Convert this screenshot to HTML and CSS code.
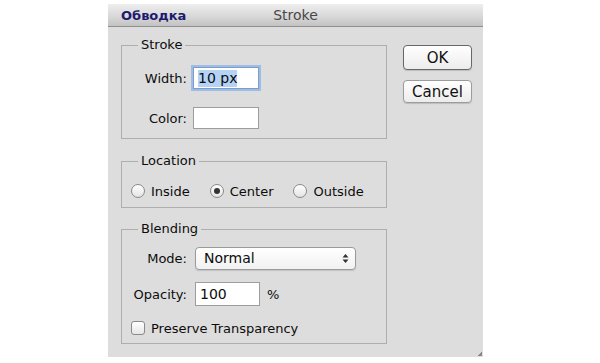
FILE: index.html
```html
<!DOCTYPE html>
<html lang="en">
<head>
    <meta charset="UTF-8">
    <meta name="viewport" content="width=device-width, initial-scale=1.0">
    <title>Stroke</title>
    <link rel="stylesheet" href="styles.css">
</head>
<body>
    <div class="dialog">
        <div class="titlebar">
            <span class="title-ru">Обводка</span>
            <span class="title">Stroke</span>
            <span></span>
        </div>

        <div class="content">
            <div class="panels">
                <!-- Stroke -->
                <fieldset class="group group-stroke">
                    <legend>Stroke</legend>
                    <div class="form-grid">
                        <label class="label">Width:</label>
                        <div class="field"><span class="input input-focus"><span class="selected">10 px</span></span></div>
                        <label class="label">Color:</label>
                        <div class="field"><span class="input"></span></div>
                    </div>
                </fieldset>

                <!-- Location -->
                <fieldset class="group group-location">
                    <legend>Location</legend>
                    <div class="radio-row">
                        <span class="option"><span class="radio"></span>Inside</span>
                        <span class="option"><span class="radio checked"></span>Center</span>
                        <span class="option"><span class="radio"></span>Outside</span>
                    </div>
                </fieldset>

                <!-- Blending -->
                <fieldset class="group group-blending">
                    <legend>Blending</legend>
                    <div class="form-grid blend-grid">
                        <label class="label">Mode:</label>
                        <div class="field">
                            <span class="select">Normal
                                <svg class="updown" width="7" height="11" viewBox="0 0 7 11">
                                    <path d="M3.5 1 L6.5 4.5 L0.5 4.5 Z" fill="#333"/>
                                    <path d="M3.5 10 L6.5 6.5 L0.5 6.5 Z" fill="#333"/>
                                </svg>
                            </span>
                        </div>
                        <label class="label">Opacity:</label>
                        <div class="field"><span class="input input-tall">100</span><span class="unit">%</span></div>
                    </div>
                    <div class="check-row">
                        <span class="checkbox"></span>Preserve Transparency
                    </div>
                </fieldset>
            </div>

            <div class="buttons">
                <button class="btn btn-default">OK</button>
                <button class="btn">Cancel</button>
            </div>
        </div>
        <span class="grip"></span>
    </div>
</body>
</html>
```

FILE: styles.css
```css
body {
    margin: 0;
    background-color: #fff;
    font-family: "DejaVu Sans", "Liberation Sans", sans-serif;
    font-size: 13px;
    color: #0c0c0c;
}
.dialog {
    position: relative;
    width: 375px;
    height: 353px;
    margin: 4px 0 0 108px;
    background-color: #dddddd;
    box-sizing: border-box;
}
.titlebar {
    display: grid;
    grid-template-columns: 1fr auto 1fr;
    align-items: center;
    height: 22px;
    border-bottom: 1px solid #8f8f8f;
    background: linear-gradient(#eeeeee, #d6d6d6 60%, #c3c3c3);
}
.title-ru {
    padding-left: 13px;
    font-weight: bold;
    font-size: 13px;
    color: #1d1a6e;
}
.title {
    font-size: 14px;
    color: #484848;
}
.content {
    display: flex;
    padding: 10px 0 0 13px;
}
.panels {
    width: 266px;
}
.group {
    margin: 0;
    border: 1px solid #aeaeae;
    padding: 0 8px;
    min-inline-size: 0;
}
.group legend {
    margin-left: 8px;
    padding: 0 3px;
    line-height: 16px;
}
.group-stroke {
    padding-top: 13px;
    padding-bottom: 8px;
}
.group-location {
    margin-top: 14px;
    padding-top: 12px;
    padding-bottom: 6px;
}
.group-blending {
    margin-top: 13px;
    padding-top: 9px;
    padding-bottom: 5px;
}
.form-grid {
    display: grid;
    grid-template-columns: 57px auto;
    grid-auto-rows: 24px;
    column-gap: 6px;
    row-gap: 16px;
    align-items: center;
}
.blend-grid {
    row-gap: 12px;
}
.label {
    text-align: right;
}
.field {
    display: flex;
    align-items: center;
}
.input {
    display: flex;
    align-items: center;
    box-sizing: border-box;
    width: 66px;
    height: 22px;
    padding: 0 4px;
    background-color: #fff;
    border: 1px solid #9d9d9d;
    font-size: 14px;
}
.input-focus {
    border-color: #7d9cc8;
    box-shadow: 0 0 0 2px #9dbde6;
}
.input-tall {
    width: 65px;
    height: 24px;
    margin-left: 2px;
}
.selected {
    background-color: #b4d3f7;
    line-height: 17px;
}
.unit {
    margin-left: 7px;
}
.select {
    display: flex;
    align-items: center;
    justify-content: space-between;
    box-sizing: border-box;
    width: 161px;
    height: 23px;
    margin-left: 2px;
    padding: 0 6px 0 8px;
    border: 1px solid #9a9a9a;
    border-radius: 4px;
    background: linear-gradient(#ffffff, #f1f1f1);
    box-shadow: 0 1px 1px rgba(0, 0, 0, 0.12);
    font-size: 14px;
}
.radio-row {
    display: flex;
    align-items: center;
    gap: 20px;
    height: 20px;
    padding-left: 1px;
}
.option {
    display: flex;
    align-items: center;
    gap: 6px;
}
.radio {
    position: relative;
    box-sizing: border-box;
    width: 14px;
    height: 14px;
    border: 1px solid #8a8a8a;
    border-radius: 50%;
    background: linear-gradient(#ffffff, #e4e4e4);
}
.radio.checked::after {
    content: "";
    position: absolute;
    left: 3px;
    top: 3px;
    width: 6px;
    height: 6px;
    border-radius: 50%;
    background-color: #333;
}
.check-row {
    display: flex;
    align-items: center;
    gap: 6px;
    height: 20px;
    margin-top: 12px;
    padding-left: 1px;
}
.checkbox {
    box-sizing: border-box;
    width: 14px;
    height: 14px;
    border: 1px solid #8a8a8a;
    border-radius: 3px;
    background: linear-gradient(#ffffff, #e6e6e6);
}
.buttons {
    display: flex;
    flex-direction: column;
    gap: 10px;
    margin-left: 16px;
    padding-top: 8px;
}
.btn {
    width: 69px;
    height: 23px;
    padding: 0;
    border: 1px solid #9c9c9c;
    border-radius: 4px;
    background: linear-gradient(#ffffff, #ececec);
    box-shadow: 0 1px 1px rgba(0, 0, 0, 0.15);
    font-family: "DejaVu Sans", "Liberation Sans", sans-serif;
    font-size: 15px;
    color: #111;
}
.btn-default {
    height: 25px;
    border-color: #676767;
}
.grip {
    position: absolute;
    right: 1px;
    bottom: 1px;
    width: 4px;
    height: 4px;
    background: linear-gradient(135deg, transparent 50%, #888 50%);
}
```
